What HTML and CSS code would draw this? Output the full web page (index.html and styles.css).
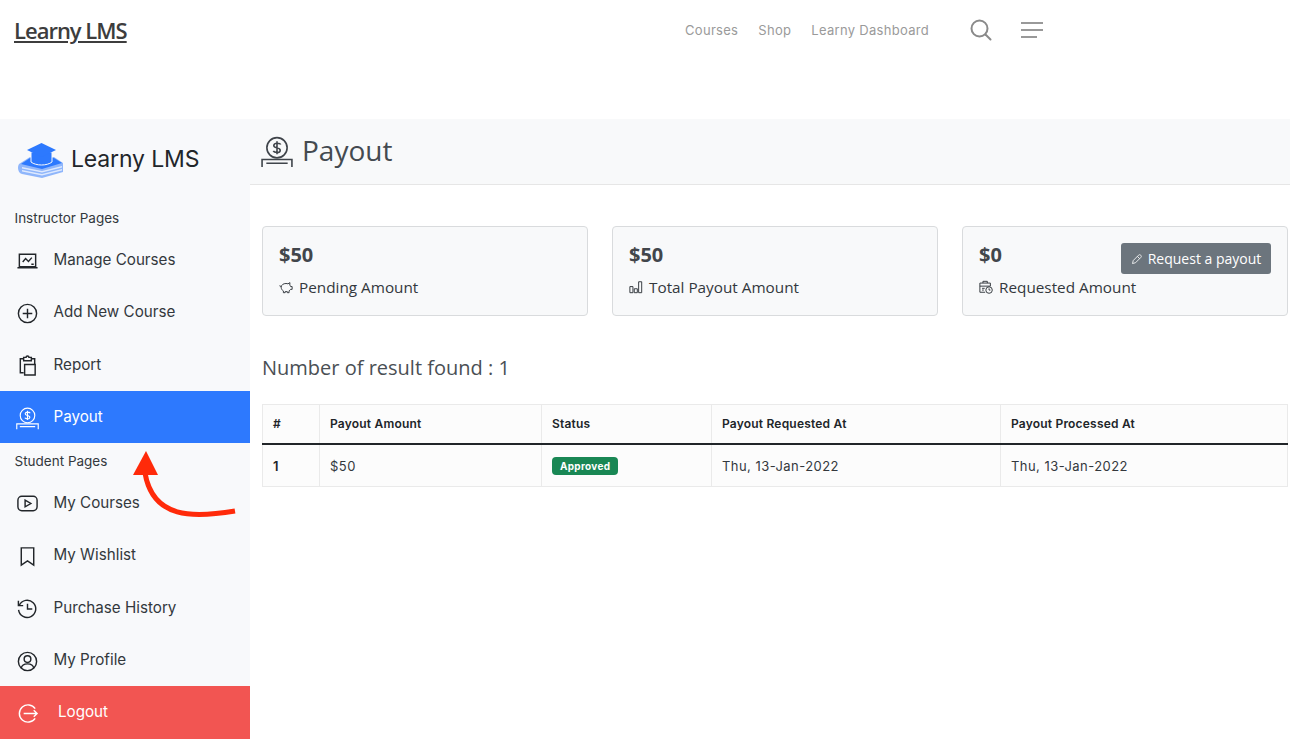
FILE: index.html
```html
<!DOCTYPE html>
<html>
<head>
    <title>Payout - Learny LMS</title>
    <link rel="stylesheet" href="styles.css">
</head>
<body>

<header class="topbar">
    <a class="site-title" href="#">Learny LMS</a>
    <nav class="top-nav">
        <a href="#">Courses</a>
        <a href="#">Shop</a>
        <a href="#">Learny Dashboard</a>
    </nav>
    <svg class="top-search" width="22" height="22" viewBox="0 0 22 22" fill="none" stroke="#8a8a8a" stroke-width="2"><circle cx="9.500" cy="9.500" r="8"/><path d="M15.500 15.500l5 5" stroke-linecap="round"/></svg>
    <svg class="top-menu" width="24" height="18" viewBox="0 0 24 18" fill="none" stroke="#999" stroke-width="2"><path d="M1 2h22M1 9h22M1 16h16"/></svg>
</header>

<div class="layout">
    <aside class="sidebar">
        <div class="brand">
            <svg class="brand-logo" width="46" height="36" viewBox="0 0 46 36">
                <path d="M1 21l11-7h24l9 6v9L24 35 4 31c-4-1-5-7-3-10z" fill="#8fb6fb"/>
                <path d="M4 24l20 4 20-5v1.500l-20 5-20-4zM4 27l20 4 20-5v1.500l-20 5-20-4z" fill="#fff" opacity=".7"/>
                <path d="M3 21l9-6h24l8 5-20 6z" fill="#2d79fe"/>
                <path d="M13 9v10c5 4 16 4 21 0V9z" fill="#2d79fe" stroke="#f8f9fb" stroke-width="1"/>
                <path d="M23.500 0L38 7l-14.500 7L9 7z" fill="#2d79fe"/>
            </svg>
            <span>Learny LMS</span>
        </div>

        <div class="side-label first">Instructor Pages</div>
        <a class="side-item" href="#">
            <svg class="side-icon" viewBox="0 0 24 24"><path d="M3.500 5.500h17v13h-17zM1.500 19.500h21"/><path d="M7 13.500l3-3.500 3 3 3.500-4M16 16h2.500"/></svg>
            Manage Courses
        </a>
        <a class="side-item" href="#">
            <svg class="side-icon" viewBox="0 0 24 24"><circle cx="12" cy="12" r="9.500"/><path d="M12 7v10M7 12h10"/></svg>
            Add New Course
        </a>
        <a class="side-item" href="#">
            <svg class="side-icon" viewBox="0 0 24 24"><path d="M8 19.500H4.500V5H8M16 5h3.500v6"/><path d="M8 3.500h2.500a1.500 1.500 0 0 1 3 0H16V7H8z"/><path d="M9 11h11v11H9z"/></svg>
            Report
        </a>
        <a class="side-item active" href="#">
            <svg class="side-icon" viewBox="0 0 30 30"><circle cx="15" cy="11" r="9.500"/><path d="M18.500 8c-.7-1.500-6-2-6.500.7-.5 3.200 6.500 1.500 6 5-.4 2.600-5.500 2-6.500.4M15 5v12"/><path d="M1 29v-7h28v7M5 25.500h20"/></svg>
            Payout
        </a>

        <div class="side-label">Student Pages</div>
        <a class="side-item" href="#">
            <svg class="side-icon" viewBox="0 0 24 24"><rect x="2" y="4.500" width="20" height="15" rx="4"/><path d="M9.500 8.500l6 3.500-6 3.500z"/></svg>
            My Courses
        </a>
        <a class="side-item" href="#">
            <svg class="side-icon" viewBox="0 0 24 24"><path d="M5.500 3h13v18L12 16.500 5.500 21z"/></svg>
            My Wishlist
        </a>
        <a class="side-item" href="#">
            <svg class="side-icon" viewBox="0 0 24 24"><path d="M3.500 8.500a9 9 0 1 1-.8 5"/><path d="M2.500 4v5h5M12 7v5.500h5"/></svg>
            Purchase History
        </a>
        <a class="side-item" href="#">
            <svg class="side-icon" viewBox="0 0 24 24"><circle cx="12" cy="12" r="9.500"/><circle cx="12" cy="9.500" r="3.500"/><path d="M5.500 19c1-6 12-6 13 0"/></svg>
            My Profile
        </a>
        <a class="side-item logout" href="#">
            <svg class="side-icon" viewBox="0 0 24 24"><path d="M20 7a9 9 0 1 0 0 10"/><path d="M8 12h14M18.500 8.500L22 12l-3.500 3.500"/></svg>
            Logout
        </a>
    </aside>

    <main class="content">
        <div class="page-head">
            <svg class="head-icon" viewBox="0 0 30 30"><circle cx="15" cy="11" r="9.500"/><path d="M18.500 8c-.7-1.500-6-2-6.500.7-.5 3.200 6.500 1.500 6 5-.4 2.600-5.500 2-6.500.4M15 5v12"/><path d="M1 29v-7h28v7M5 25.500h20"/></svg>
            <h1>Payout</h1>
        </div>

        <div class="cards">
            <div class="card">
                <div class="amount">$50</div>
                <div class="card-label">
                    <svg class="mini-icon" viewBox="0 0 16 16"><path d="M2.500 8C2.800 5.500 5 4 8 4c.8 0 1.500.1 2.200.4L12.500 3l-.2 2.800c.5.500.8 1 1 1.700H15v3.200h-1.800c-.4.700-1 1.300-1.700 1.700V14.500h-2V13.300H7v1.200H5v-2C3.500 11.700 2.500 10 2.500 8.300 1.500 8 1 7 1 6"/></svg>
                    Pending Amount
                </div>
            </div>
            <div class="card">
                <div class="amount">$50</div>
                <div class="card-label">
                    <svg class="mini-icon" viewBox="0 0 16 16"><path d="M1 7.500h3.500v7H1zM6 10h3.500v4.500H6zM11 2h3.500v12.500H11z"/></svg>
                    Total Payout Amount
                </div>
            </div>
            <div class="card">
                <div class="amount">$0</div>
                <div class="card-label">
                    <svg class="mini-icon" viewBox="0 0 16 16"><path d="M7 14H1V3.500h12V7M4.500 3.500v-2h5v2M1 7h12M3.500 9.500h3M3.500 11.500h2"/><circle cx="11.500" cy="11.500" r="3.700"/><path d="M11.500 9.500v2h1.500"/></svg>
                    Requested Amount
                </div>
                <a class="payout-btn" href="#">
                    <svg class="btn-icon" viewBox="0 0 16 16"><path d="M2 14l1-4 7-7c1-1 2-1 3 0s1 2 0 3l-7 7z"/><path d="M8.500 4.500l3 3"/></svg>
                    Request a payout
                </a>
            </div>
        </div>

        <h2 class="result-count">Number of result found : 1</h2>

        <table class="payout-table">
            <thead>
                <tr>
                    <th class="col-num">#</th>
                    <th class="col-amount">Payout Amount</th>
                    <th class="col-status">Status</th>
                    <th class="col-date">Payout Requested At</th>
                    <th>Payout Processed At</th>
                </tr>
            </thead>
            <tbody>
                <tr>
                    <th>1</th>
                    <td>$50</td>
                    <td><span class="badge">Approved</span></td>
                    <td>Thu, 13-Jan-2022</td>
                    <td>Thu, 13-Jan-2022</td>
                </tr>
            </tbody>
        </table>
    </main>
</div>

<svg class="arrow" width="110" height="80" viewBox="0 0 110 80" fill="none">
    <path d="M102 60C60 67 20 68 12 22" stroke="#ff2a0a" stroke-width="5"/>
    <path d="M13 0L25 24H0z" fill="#ff2a0a"/>
</svg>

</body>
</html>
```

FILE: styles.css
```css
body {
    margin: 0;
    height: 739px;
    overflow: hidden;
    background-color: white;
    font-family: Inter, sans-serif;
    color: #212529;
    position: relative;
}
a {
    text-decoration: none;
    color: inherit;
}

/* top bar */
.topbar {
    height: 119px;
    display: flex;
    align-items: flex-start;
    padding-left: 14px;
    box-sizing: border-box;
}
.site-title {
    font-family: "Open Sans", sans-serif;
    font-size: 22px;
    letter-spacing: -1px;
    line-height: 28px;
    margin-top: 16px;
    color: #3d3d3d;
    text-decoration: underline;
    font-weight: 600;
    width: 671px;
}
.top-nav {
    display: flex;
    gap: 20px;
    font-size: 13px;
    letter-spacing: 0.3px;
    line-height: 20px;
    margin-top: 20px;
    color: #9a9a9a;
    width: 285px;
}
.top-search {
    margin-top: 19px;
    margin-right: 28px;
}
.top-menu {
    margin-top: 21px;
}

.layout {
    display: flex;
    height: 620px;
}

/* sidebar */
.sidebar {
    width: 250px;
    flex-shrink: 0;
    background-color: #f8f9fb;
}
.brand {
    height: 78px;
    display: flex;
    align-items: center;
    padding-left: 18px;
    gap: 7px;
    font-size: 23px;
    letter-spacing: -0.15px;
    color: #22262a;
}
.brand span {
    margin-top: 2px;
}
.brand-logo {
    margin-top: 5px;
}
.side-label {
    font-size: 13.500px;
    height: 33px;
    line-height: 36px;
    padding-left: 14.500px;
    color: #33383d;
}
.side-label.first {
    height: 36px;
    line-height: 42px;
}
.side-item {
    height: 52.500px;
    display: flex;
    align-items: center;
    padding-left: 16px;
    font-size: 15.200px;
    color: #33383d;
}
.side-icon {
    width: 23px;
    height: 23px;
    margin-right: 14.500px;
    margin-top: 3px;
    fill: none;
    stroke: #22262a;
    stroke-width: 1.500;
}
.side-item.active {
    background-color: #2d79fe;
    color: white;
}
.side-item.active .side-icon,
.side-item.logout .side-icon {
    stroke: white;
}
.side-item.logout {
    height: 53px;
    box-sizing: border-box;
    padding-bottom: 2px;
    background-color: #f25552;
    color: white;
}
.side-item.logout .side-icon {
    margin-right: 19px;
}

/* main */
.content {
    flex: 1;
    min-width: 0;
}
.page-head {
    height: 66px;
    background-color: #f8f9fa;
    border-bottom: 1px solid #e6e6e6;
    box-sizing: border-box;
    display: flex;
    align-items: center;
    padding: 0 0 3px 11px;
    gap: 9px;
    font-family: "Open Sans", sans-serif;
}
.head-icon {
    width: 32px;
    height: 32px;
    fill: none;
    stroke: #3f444a;
    stroke-width: 1.500;
    margin-top: 3px;
}
.page-head h1 {
    margin: 0;
    font-size: 28px;
    font-weight: 400;
    color: #444a50;
}
.cards {
    display: flex;
    gap: 24px;
    margin: 41px 2px 0 12px;
}
.card {
    flex: 1;
    height: 90px;
    box-sizing: border-box;
    background-color: #f8f9fa;
    border: 1px solid #d9dbdd;
    border-radius: 4px;
    padding: 16px;
    font-family: "Open Sans", sans-serif;
    position: relative;
}
.amount {
    font-size: 20px;
    font-weight: 700;
    line-height: 24px;
    color: #42464b;
}
.card-label {
    display: flex;
    align-items: center;
    gap: 6px;
    margin-top: 7.500px;
    font-size: 15.300px;
    line-height: 24px;
    color: #33383d;
}
.mini-icon {
    width: 14px;
    height: 14px;
    fill: none;
    stroke: #33383d;
    stroke-width: 1.100;
}
.payout-btn {
    position: absolute;
    top: 16px;
    right: 16px;
    width: 150px;
    height: 31px;
    box-sizing: border-box;
    border-radius: 3px;
    background-color: #6c757d;
    color: white;
    font-size: 14px;
    display: flex;
    align-items: center;
    justify-content: center;
    gap: 5px;
}
.btn-icon {
    width: 12px;
    height: 12px;
    fill: none;
    stroke: white;
    stroke-width: 1.100;
}
.result-count {
    margin: 38px 0 0 12px;
    font-family: "Open Sans", sans-serif;
    font-size: 20px;
    font-weight: 400;
    line-height: 28px;
    color: #4a4f54;
}

/* table */
.payout-table {
    width: 1026px;
    margin: 22px 0 0 12px;
    border-collapse: collapse;
    table-layout: fixed;
    background-color: #fcfcfc;
    font-size: 13px;
    color: #33383d;
}
.payout-table th,
.payout-table td {
    border: 1px solid #eaeaea;
    padding: 0 10px;
    text-align: left;
    letter-spacing: 0.45px;
}
.payout-table th {
    font-size: 12px;
    letter-spacing: 0.2px;
    font-weight: 600;
    color: #212529;
}
.payout-table thead th {
    height: 37px;
    padding-bottom: 1px;
    border-bottom: 2px solid #212529;
}
.payout-table tbody th,
.payout-table tbody td {
    height: 41px;
    border-top: none;
}
.payout-table tbody th {
    font-size: 13px;
}
.col-num { width: 36px; }
.col-amount { width: 201px; }
.col-status { width: 149px; }
.col-date { width: 268px; }
.badge {
    display: inline-block;
    background-color: #198754;
    color: white;
    font-size: 10px;
    font-weight: 700;
    line-height: 18px;
    padding: 0 8px;
    border-radius: 4px;
    letter-spacing: 0.3px;
}

/* annotation drawn over the screenshot */
.arrow {
    position: absolute;
    left: 133px;
    top: 451px;
}
```
